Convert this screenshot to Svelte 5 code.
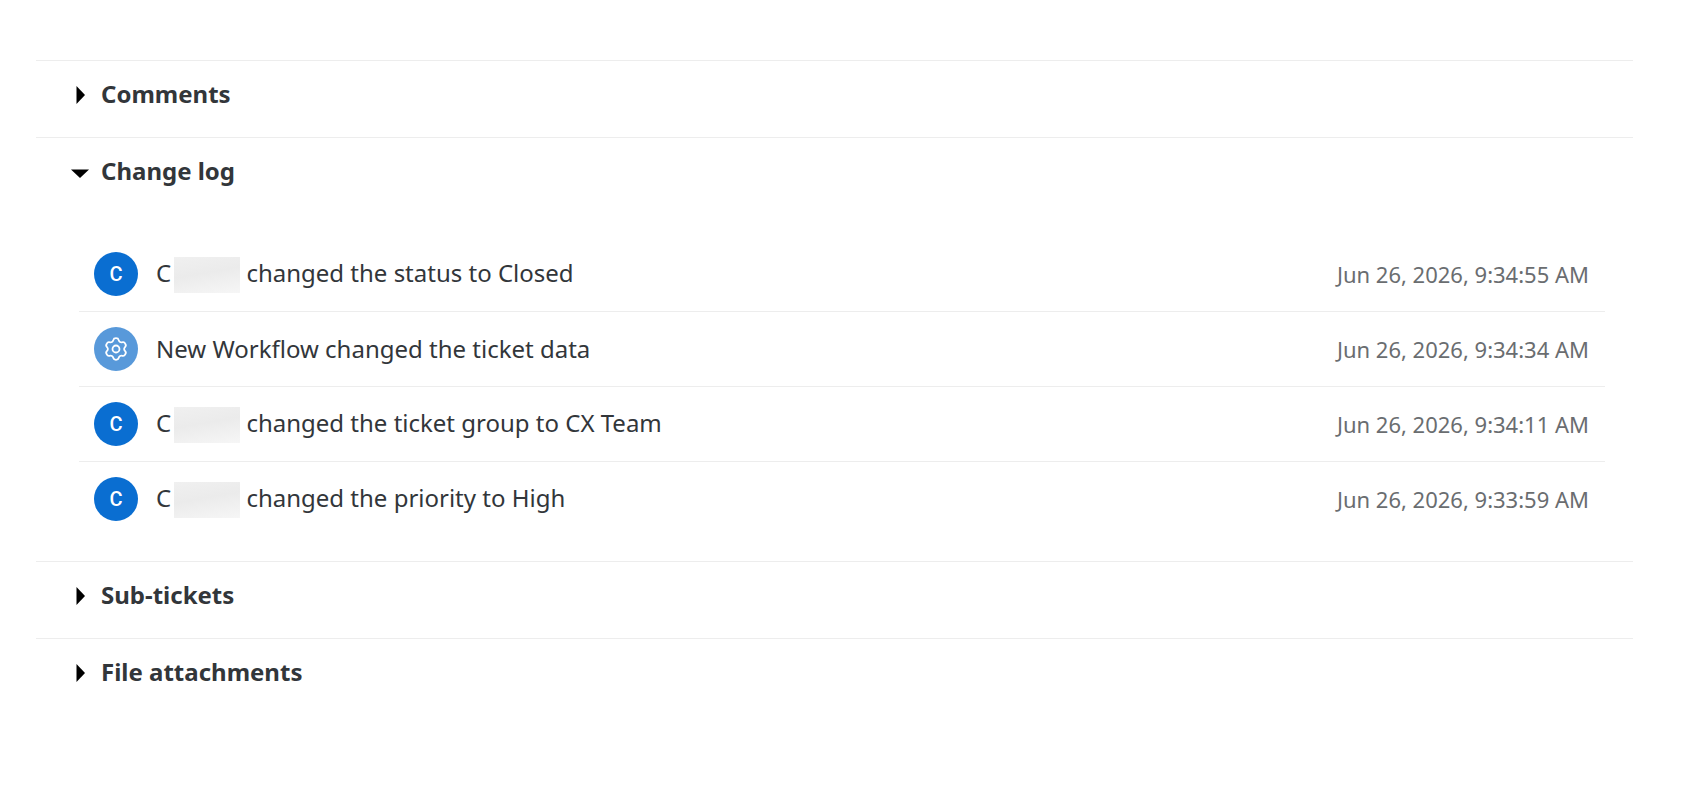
<script lang="ts">
	type Entry = {
		user: boolean;
		name: string;
		text: string;
		time: string;
	};

	let sections = $state([
		{ id: 'comments', title: 'Comments', open: false },
		{ id: 'changelog', title: 'Change log', open: true },
		{ id: 'subtickets', title: 'Sub-tickets', open: false },
		{ id: 'attachments', title: 'File attachments', open: false }
	]);

	const log: Entry[] = [
		{ user: true, name: 'C', text: 'changed the status to Closed', time: 'Jun 26, 2026, 9:34:55 AM' },
		{ user: false, name: 'New Workflow', text: 'changed the ticket data', time: 'Jun 26, 2026, 9:34:34 AM' },
		{ user: true, name: 'C', text: 'changed the ticket group to CX Team', time: 'Jun 26, 2026, 9:34:11 AM' },
		{ user: true, name: 'C', text: 'changed the priority to High', time: 'Jun 26, 2026, 9:33:59 AM' }
	];
</script>

<main>
	{#each sections as section (section.id)}
		<section>
			<h2>
				<button
					type="button"
					aria-expanded={section.open}
					onclick={() => (section.open = !section.open)}
				>
					<svg class="arrow" viewBox="0 0 18 20" aria-hidden="true">
						{#if section.open}
							<path d="M0 8.500h18l-9 8.500z" />
						{:else}
							<path d="M5.500 2v18l8.500-9z" />
						{/if}
					</svg>
					{section.title}
				</button>
			</h2>
			{#if section.open && section.id === 'changelog'}
				<ul>
					{#each log as entry}
						<li>
							{#if entry.user}
								<span class="avatar">{entry.name}</span>
							{:else}
								<span class="avatar system">
									<svg class="gear" viewBox="0 0 24 24" aria-hidden="true">
										<path
											d="M12 1.200Q14.250 1.200 14.660 2.920Q15.070 4.400 16.060 4.970Q17.050 5.540 18.540 5.150Q20.200 4.670 21.250 6.650Q22.500 8.600 21.200 9.760Q20.120 10.860 20.120 12Q20.120 13.140 21.200 14.240Q22.500 15.400 21.250 17.350Q20.200 19.330 18.540 18.850Q17.050 18.460 16.060 19.030Q15.070 19.600 14.660 21.080Q14.250 22.800 12 22.800Q9.750 22.800 9.340 21.080Q8.930 19.600 7.940 19.030Q6.950 18.460 5.460 18.850Q3.800 19.330 2.750 17.350Q1.500 15.400 2.800 14.240Q3.880 13.140 3.880 12Q3.880 10.860 2.800 9.760Q1.500 8.600 2.750 6.650Q3.800 4.670 5.460 5.150Q6.950 5.540 7.940 4.970Q8.930 4.400 9.340 2.920Q9.750 1.200 12 1.200z"
										/>
										<circle cx="12" cy="12" r="3.500" />
									</svg>
								</span>
							{/if}
							<span class="text">
								{entry.name}{#if entry.user}<span class="mask"></span>{/if}
								{entry.text}
							</span>
							<time>{entry.time}</time>
						</li>
					{/each}
				</ul>
			{/if}
		</section>
	{/each}
</main>

<style>
	:global(body) {
		background: #fff;
	}

	main {
		padding: 60px 67px 60px 36px;
		font-family: 'Noto Sans', 'Open Sans', sans-serif;
		color: #32363a;
	}

	section {
		border-top: 1px solid #ededed;
	}

	h2 {
		margin: 0;
		font-size: 24px;
		line-height: 28px;
	}

	button {
		display: flex;
		align-items: center;
		gap: 12px;
		width: 100%;
		padding: 19px 35px 29px;
		border: 0;
		background: none;
		color: inherit;
		font: inherit;
		text-align: left;
		cursor: pointer;
	}

	.arrow {
		width: 18px;
		height: 20px;
		fill: #000;
	}

	ul {
		list-style: none;
		margin: 0;
		padding: 23px 28px 25px 43px;
	}

	li {
		display: flex;
		align-items: center;
		height: 74px;
		padding: 0 16px 0 15px;
	}

	li + li {
		border-top: 1px solid #ededed;
	}

	.avatar {
		display: flex;
		align-items: center;
		justify-content: center;
		flex: none;
		width: 44px;
		height: 44px;
		margin-right: 18px;
		border-radius: 50%;
		background: #0a6ed1;
		color: #fff;
		font-family: Roboto, 'Liberation Sans', sans-serif;
		font-size: 20px;
		font-weight: 500;
	}

	.system {
		background: #5899da;
	}

	.gear {
		width: 24px;
		height: 24px;
		fill: none;
		stroke: #fff;
		stroke-width: 1.800;
	}

	.text {
		flex: 1;
		font-size: 24px;
		line-height: 36px;
	}

	.mask {
		display: inline-block;
		width: 66px;
		height: 36px;
		margin-left: 3px;
		vertical-align: middle;
		background: linear-gradient(170deg, #f0f0f0, #ebebeb 45%, #f6f6f6);
	}

	time {
		color: #6a6d70;
		font-size: 22px;
		line-height: 28px;
	}
</style>
